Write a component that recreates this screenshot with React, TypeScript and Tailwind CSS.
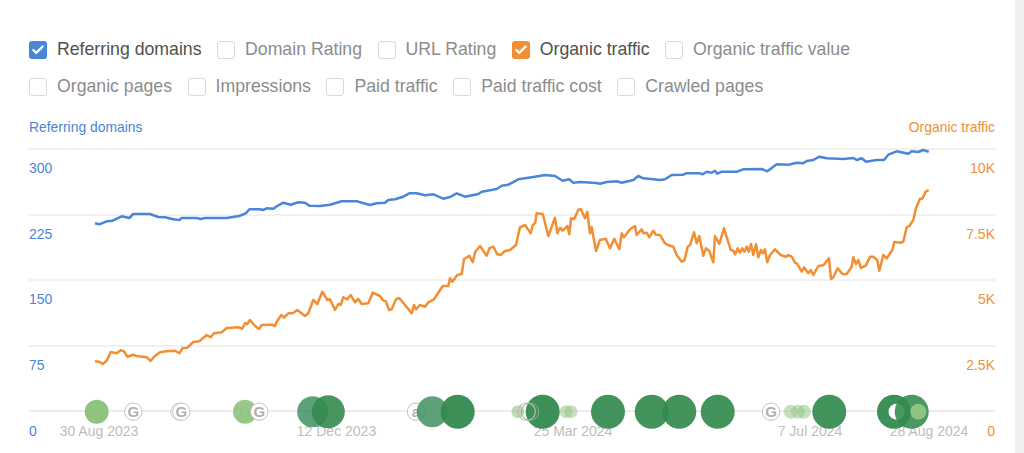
import { Check } from "lucide-react";

const metricRows = [
    [
        { label: "Referring domains", checked: "blue" },
        { label: "Domain Rating" },
        { label: "URL Rating" },
        { label: "Organic traffic", checked: "orange" },
        { label: "Organic traffic value" },
    ],
    [
        { label: "Organic pages" },
        { label: "Impressions" },
        { label: "Paid traffic" },
        { label: "Paid traffic cost" },
        { label: "Crawled pages" },
    ],
];

const axisRows = [
    { left: "300", right: "10K" },
    { left: "225", right: "7.5K" },
    { left: "150", right: "5K" },
    { left: "75", right: "2.5K" },
];

const blueLine =
    "95,223.3 99.3,224.3 106.7,221.3 112.7,220.7 121.7,216.3 129.3,218 133.3,214 150,214 158.3,217 165,217.3 173.3,219.3 179.3,220 181.7,218 196.7,218 200.7,219 205,218 226.7,218 239.3,216 245.7,213.3 249.3,209.3 260,209.3 262.7,210 266.7,208.3 273.3,208.7 277.3,206 283.3,202.7 290.7,204.7 298.3,202.3 305,202.7 309.3,205.7 320,206 330,204.7 341.7,201.3 356.7,201.3 370,205 376.7,203.3 385,202.7 388.3,200 395,199.3 403.3,196.7 409.3,193.3 416.7,193.3 425,195.3 433.3,194.3 443.3,198.7 450,197 456.7,193.3 465,196.7 478.3,194 481.7,191.7 496.7,189 501.7,185.7 508.3,184.7 512.7,182.3 518.3,179.3 533.3,177 545,175 555,176 562.7,180.7 569,179.3 573.3,182.7 580,182 596.7,183 600,183.7 606.7,182 616.7,181.3 621.7,182.7 633.3,180 638.3,176 643.3,178.3 653.3,179.3 660,180 665,179.3 671.7,175 683.3,174.7 686,173.3 700,173.3 702.7,174.3 706.7,171.7 711.7,172.7 715,170.7 717.3,173.7 721.7,171.7 737.3,171.7 743.3,169.3 761.7,169 767.3,171.3 776.7,164.3 788.3,164.7 796.7,162.7 803.3,163.3 806.7,161 813.3,160 819.3,156.7 826.7,158.3 843.3,159 853.3,158 856.7,160 861.7,158.3 866,161.7 876.7,160 884,160 888.3,154.7 896.7,151.3 908.3,153.7 911.7,151.3 918.3,152 923.3,150 928.7,151.7";

const orangeLine =
    "95,361.3 99.3,361.7 102.7,364 106.7,360.7 110.7,352 116.7,353.3 120.7,350.3 124,351.3 127.3,356.7 133.3,354.7 136.7,356 146.7,357.3 150.7,361 154,356.7 160,352.3 166,351.3 175,350.7 179.3,353.3 182.7,348 187.3,347.7 193.3,342 199.3,341.3 206.7,335 210.7,337.3 214,333.3 221.7,332.3 226.7,328 238.3,327.3 242.3,328.7 245,323.3 247.3,324 250,320 255,326 259,329 261.7,325 271.7,324.7 275,326 276.7,321.7 281.3,315 284,317.7 288.3,313.3 292.7,313.3 297.3,310 305,316 308.3,313.3 313.3,300 317.3,304 322.3,291.7 327.3,300 330,299.3 335,310 338.3,304 340.7,305 343.3,297.3 347.3,299.3 350.7,295 355,302.3 358.3,299 361.7,304 368.3,303.3 372.7,292.7 380,296 382.7,300 386,301.7 389,310 391.7,309.3 396,299.3 399.3,298 411.7,313.3 414,305 416,309.3 420,305 425,306.7 428.3,302.3 434,299.3 442.7,286 448.3,286 450,278.3 452.3,281.7 457.3,275 461.7,274 464,259.3 469.3,255.7 472.7,262.3 475.3,251.7 480,246 486.7,255.7 489.3,248.3 493.3,246.7 497.3,254.3 500.7,255 505,251 510,250 516,245 520,227.3 525,225 530.7,233.3 532.7,225 535,223.3 536.7,213.3 542.7,214 548.3,236 555,217.7 557.3,233.3 560,227.7 562.7,230.7 567.3,226 569.3,234.3 571,218.3 574,219.3 578.3,210 580.7,209 585,218.3 587.3,211.7 590,233.3 591.7,227.3 596,251 600,240 605.7,238.7 610,248.3 614.3,238.7 619.3,249.3 621.7,233.3 624,237.3 630,229.3 635,226 636.7,235 641.7,229.3 643.3,233.3 646.7,232.7 649.3,237.3 653.3,230.7 656,234.7 660,235 665,243.3 668.3,245.3 673.3,246.7 676.7,255 681.7,261.7 684.3,260.7 687.7,246.7 690,245 694,232.3 696.7,243.3 699.3,236 703.3,255.7 706,248.3 709.3,251 713.3,262.3 715,236 719.3,244 724,228.3 730.7,250 733.3,250.7 735.3,254.3 737.7,248.3 740,252.7 742.3,248.3 744.3,251.7 746.7,246.7 748.7,251.7 751,244 753.3,255 756,244.3 758.3,257.3 761,250 762.7,253.3 765,249.3 767.3,262.3 770,255 775,249.3 780.7,255 786,256.7 788.3,255 791.7,256.7 795,262.7 797.3,264 801.7,271.7 804,267.3 808.3,273.3 810.7,270 813.3,275 818.3,266 823.3,265.3 829,258.3 831,279 833.3,277.3 837.7,268.3 842.7,274.3 846.7,274 851.7,266.7 853.3,257.3 856,264 858.3,260 861,268 866,265.3 870,256.7 873.3,256.7 877.3,260 879.3,270.7 883.3,255 886.7,258.3 892.3,250 894.3,242 900,242.7 903.3,241.7 906.7,227.3 909.3,226 913.3,220 916,208.3 920,198.7 922.3,198.7 925.7,191.7 928.7,190";

// events along the zero line, drawn in the order they stack
const greenDots = [
    { cx: 96.7, r: 12, fill: "#8fc47f" },
    { cx: 245, r: 12, fill: "#8fc47f", opacity: 0.92 },
    { cx: 312.7, r: 15.5, fill: "#3f9160", opacity: 0.85 },
    { cx: 328.3, r: 16.5, fill: "#338a4e", opacity: 0.9 },
    { cx: 432.3, r: 15.5, fill: "#3f9160", opacity: 0.85 },
    { cx: 457.7, r: 17, fill: "#338a4e", opacity: 0.95 },
    { cx: 518, r: 6.5, fill: "#8fc47f", opacity: 0.6 },
    { cx: 542.7, r: 17, fill: "#338a4e", opacity: 0.95 },
    { cx: 566, r: 6.5, fill: "#8fc47f", opacity: 0.5 },
    { cx: 571, r: 6.5, fill: "#8fc47f", opacity: 0.5 },
    { cx: 608, r: 17, fill: "#338a4e", opacity: 0.92 },
    { cx: 651.7, r: 17, fill: "#338a4e", opacity: 0.92 },
    { cx: 679.3, r: 17, fill: "#338a4e", opacity: 0.92 },
    { cx: 717.7, r: 17, fill: "#338a4e", opacity: 0.92 },
    { cx: 790.7, r: 7, fill: "#8fc47f", opacity: 0.5 },
    { cx: 798, r: 7, fill: "#8fc47f", opacity: 0.5 },
    { cx: 804, r: 7, fill: "#8fc47f", opacity: 0.5 },
    { cx: 829.3, r: 17, fill: "#338a4e", opacity: 0.92 },
    { cx: 894, r: 17, fill: "#338a4e", opacity: 0.95 },
];

const topDots = [
    { cx: 911.7, r: 17, fill: "#338a4e", opacity: 0.88 },
    { cx: 918.3, r: 8, fill: "#8fc47f", opacity: 1 },
];

const letterDots = [
    { cx: 179.5, letter: "G", faint: true },
    { cx: 181.3, letter: "G" },
    { cx: 133.3, letter: "G" },
    { cx: 245, letter: "G" },
    { cx: 416, letter: "a" },
    { cx: 771, letter: "G" },
];

function Checkbox({ color }: { color?: string }) {
    if (color) {
        return (
            <span
                className={`flex h-[18px] w-[18px] items-center justify-center rounded-[3px] ${color === "blue" ? "bg-[#4a86d8]" : "bg-[#f28f33]"}`}
            >
                <Check size={14} strokeWidth={4} className="text-white" />
            </span>
        );
    }
    return <span className="h-[18px] w-[18px] rounded-[3px] border border-[#d9d9d9] bg-white" />;
}

function GDot({ cx, letter, faint }: { cx: number; letter: string; faint?: boolean }) {
    return (
        <g>
            <circle cx={cx} cy="411.7" r="8.7" fill="#fff" stroke={faint ? "#d0d0d0" : "#c2c2c2"} strokeWidth="1" />
            <text x={cx} y="417" textAnchor="middle" fontSize="15" fontWeight="700" fill="#b0b0b0" fontFamily="Liberation Sans, Arial, sans-serif">
                {letter}
            </text>
        </g>
    );
}

function AxisRow({ left, right }: { left: string; right: string }) {
    return (
        <div className="flex h-[65.6px] justify-between border-t-2 border-[#f0f0f0] pt-[9px] text-[14px] leading-[18px]">
            <span className="text-[#4a86d8]">{left}</span>
            <span className="text-[#f28f33]">{right}</span>
        </div>
    );
}

export default function App() {
    return (
        <div className="flex h-[453px] w-[1024px] overflow-hidden bg-white font-['Liberation_Sans',Arial,sans-serif]">
            <div className="relative w-[1015px] pl-[29px] pr-[20px] pt-[41px]">
                <div className="flex flex-col gap-[19px]">
                    {metricRows.map((row, i) => (
                        <div key={i} className="flex gap-[15.5px]">
                            {row.map((item) => (
                                <label key={item.label} className="flex h-[18px] items-center gap-[10px]">
                                    <Checkbox color={item.checked} />
                                    <span className={`mb-[2px] text-[17.7px] leading-[18px] ${item.checked ? "text-[#505050]" : "text-[#8c8c8c]"}`}>
                                        {item.label}
                                    </span>
                                </label>
                            ))}
                        </div>
                    ))}
                </div>

                <div className="mt-[23px] flex h-[17px] justify-between text-[13.9px] leading-[17px]">
                    <span className="text-[#4a86d8]">Referring domains</span>
                    <span className="text-[#f28f33]">Organic traffic</span>
                </div>

                <div className="mt-[12px]">
                    {axisRows.map((row) => (
                        <AxisRow key={row.left} left={row.left} right={row.right} />
                    ))}
                    <div className="flex h-[41px] border-t-2 border-[#ececec] pt-[10px] text-[14px] leading-[18px]">
                        <span className="w-[10px] text-[#4a86d8]">0</span>
                        <span className="ml-[20px] w-[80px] text-center text-[#bdbdbd]">30 Aug 2023</span>
                        <span className="ml-[157.5px] w-[80px] text-center text-[#bdbdbd]">12 Dec 2023</span>
                        <span className="ml-[156.5px] w-[80px] text-center text-[#bdbdbd]">25 Mar 2024</span>
                        <span className="ml-[157px] w-[80px] text-center text-[#bdbdbd]">7 Jul 2024</span>
                        <span className="ml-[39px] w-[80px] text-center text-[#bdbdbd]">28 Aug 2024</span>
                        <span className="ml-auto text-[#f28f33]">0</span>
                    </div>
                </div>

                <svg className="pointer-events-none absolute left-0 top-0" width="1015" height="453" viewBox="0 0 1015 453">
                    <polyline points={blueLine} fill="none" stroke="#4a86d8" strokeWidth="2.5" strokeLinejoin="round" />
                    <polyline points={orangeLine} fill="none" stroke="#f28f33" strokeWidth="2.5" strokeLinejoin="round" />
                    {letterDots.map((d, i) => (
                        <GDot key={i} cx={d.cx} letter={d.letter} faint={d.faint} />
                    ))}
                    {greenDots.map((d, i) => (
                        <circle key={i} cx={d.cx} cy="411.7" r={d.r} fill={d.fill} fillOpacity={d.opacity ?? 1} />
                    ))}
                    <GDot cx={259.3} letter="G" />
                    <circle cx="526.7" cy="411.7" r="8.7" fill="none" stroke="#bdbdbd" strokeWidth="1.2" />
                    <circle cx="530" cy="411.7" r="8.7" fill="none" stroke="#8fae98" strokeWidth="1" />
                    <circle cx="896.5" cy="411.7" r="8" fill="#fff" />
                    {topDots.map((d, i) => (
                        <circle key={i} cx={d.cx} cy="411.7" r={d.r} fill={d.fill} fillOpacity={d.opacity} />
                    ))}
                </svg>
            </div>
            <div className="w-[9px] bg-[#eef0f1]" />
        </div>
    );
}
